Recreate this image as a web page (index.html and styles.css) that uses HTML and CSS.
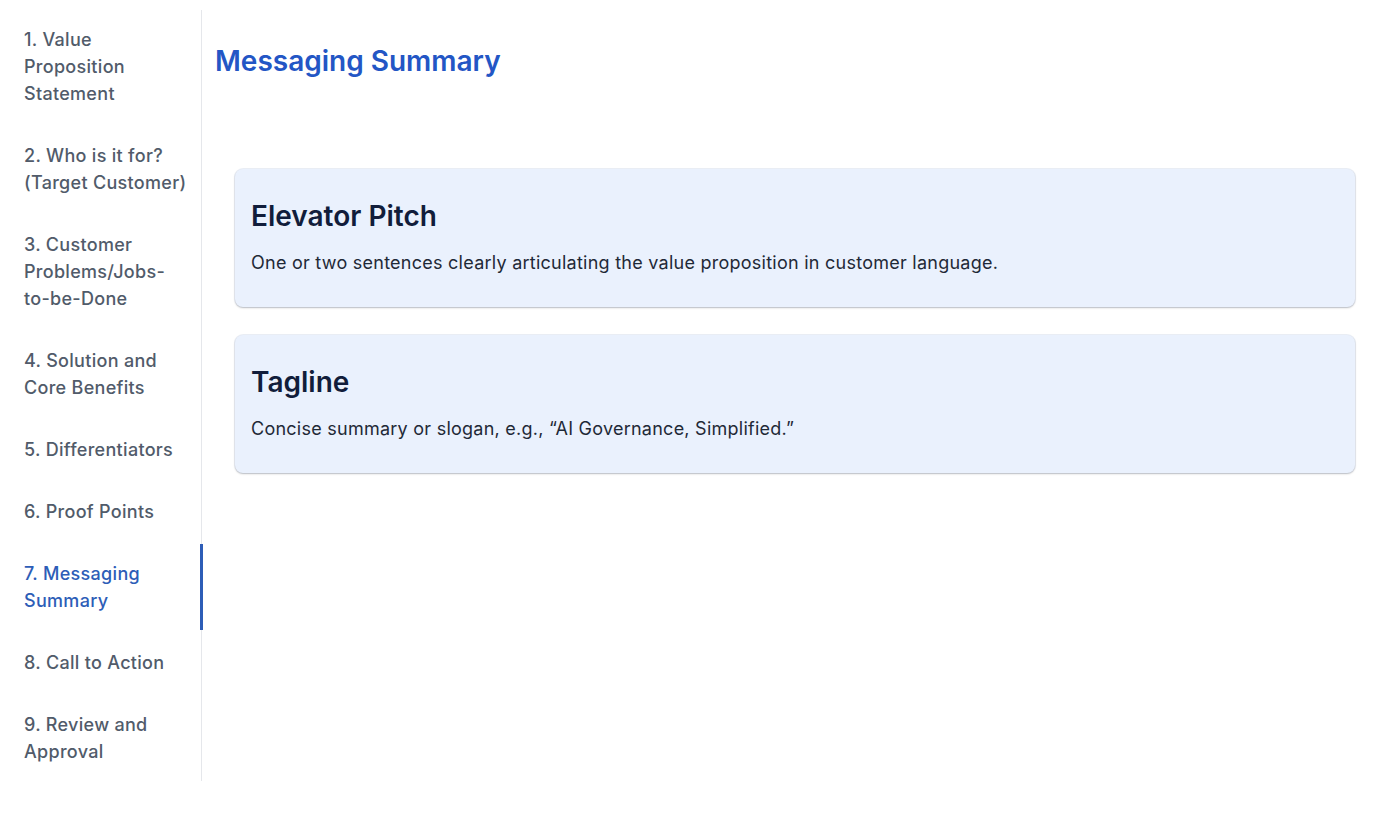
FILE: index.html
```html
<!DOCTYPE html>
<html lang="en">
<head>
  <meta charset="UTF-8">
  <title>Messaging Summary</title>
  <link rel="stylesheet" href="styles.css">
</head>
<body>

  <div class="layout">
    <nav class="sidebar">
      <a class="nav-item" href="#">1. Value Proposition Statement</a>
      <a class="nav-item" href="#">2. Who is it for? (Target Customer)</a>
      <a class="nav-item" href="#">3. Customer Problems/Jobs-to-be-Done</a>
      <a class="nav-item" href="#">4. Solution and Core Benefits</a>
      <a class="nav-item" href="#">5. Differentiators</a>
      <a class="nav-item" href="#">6. Proof Points</a>
      <a class="nav-item active" href="#">7. Messaging Summary</a>
      <a class="nav-item" href="#">8. Call to Action</a>
      <a class="nav-item" href="#">9. Review and Approval</a>
    </nav>

    <main class="content">
      <h1 class="page-title">Messaging Summary</h1>

      <div class="cards">
        <div class="card">
          <h2>Elevator Pitch</h2>
          <p>One or two sentences clearly articulating the value proposition in customer language.</p>
        </div>
        <div class="card">
          <h2>Tagline</h2>
          <p>Concise summary or slogan, e.g., “AI Governance, Simplified.”</p>
        </div>
      </div>
    </main>
  </div>

</body>
</html>
```

FILE: styles.css
```css
body { margin: 0; font-family: Inter, "Noto Sans", sans-serif; background: #fff; color: #1f2937; }
.layout { display: flex; align-items: flex-start; padding-top: 10px; }

.sidebar { width: 201px; flex-shrink: 0; border-right: 1px solid #e5e7eb; display: flex; flex-direction: column; gap: 3px; }
.nav-item { position: relative; display: block; padding: 16px 11px 16px 24px; font-size: 18px; line-height: 27px; font-weight: 500; letter-spacing: 0.3px; color: #515b6a; text-decoration: none; }
.nav-item.active { color: #2d5db7; }
/* active marker sits on top of the sidebar border */
.nav-item.active::after { content: ""; position: absolute; top: 0; bottom: 0; right: -2px; width: 3px; background: #2d5db7; }

.content { flex: 1; padding: 0 45px 0 13px; }
.page-title { margin: 33px 0 0; font-size: 28px; line-height: 36px; font-weight: 600; color: #2356c5; }

.cards { display: flex; flex-direction: column; gap: 28px; margin: 90px 0 0 20px; }
.card { background: #eaf1fd; border-radius: 8px; padding: 30px 16px 32px; box-shadow: 0 1px 2px rgba(0,0,0,0.22), 0 0 0 1px rgba(200,212,232,0.35); }
.card h2 { margin: 0; font-size: 28px; line-height: 34px; font-weight: 600; color: #111d3b; }
.card p { margin: 18px 0 0; font-size: 18px; line-height: 24px; letter-spacing: 0.25px; color: #1f2937; }
```
